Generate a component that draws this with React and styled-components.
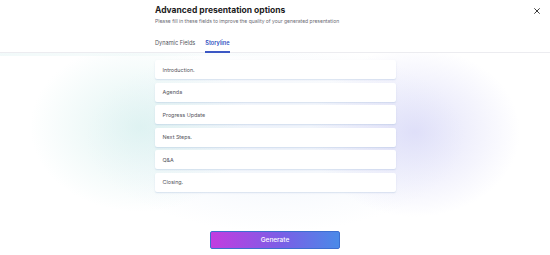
import React, { useState } from "react"
import styled, { createGlobalStyle } from "styled-components"

const GlobalStyle = createGlobalStyle`
  html, body {
    margin: 0;
    padding: 0;
    background: #ffffff;
    font-family: "Inter", "Noto Sans", sans-serif;
  }
`

const Page = styled.div`
  position: relative;
  width: 550px;
  height: 255px;
  overflow: hidden;
  background: #ffffff;
`

const Glow = styled.div`
  position: absolute;
  left: 0;
  top: 52px;
  width: 550px;
  height: 203px;
  pointer-events: none;
  background:
    radial-gradient(ellipse 110px 85px at 140px 75px, rgba(200, 235, 232, 0.55), rgba(255,255,255,0) 100%),
    radial-gradient(ellipse 105px 85px at 415px 80px, rgba(208, 208, 246, 0.65), rgba(255,255,255,0) 100%),
    radial-gradient(ellipse 190px 95px at 275px 85px, rgba(212, 226, 246, 0.4), rgba(255,255,255,0) 100%),
    linear-gradient(to right, rgba(228,244,244,0.5), rgba(255,255,255,0) 60%) top / 100% 4px no-repeat;
`

const Header = styled.header`
  position: relative;
  padding: 5px 0 0 155px;
  border-bottom: 1px solid #ececf0;
`

const Title = styled.h1`
  margin: 0;
  font-size: 8.5px;
  line-height: 11px;
  font-weight: 700;
  color: #1c1c22;
`

const Subtitle = styled.p`
  margin: 2px 0 0;
  font-size: 5px;
  line-height: 7px;
  color: #6b6b73;
`

const Close = styled.button`
  position: absolute;
  right: 8px;
  top: 6px;
  width: 10px;
  height: 10px;
  padding: 0;
  border: 0;
  background: none;
  display: flex;
  align-items: center;
  justify-content: center;
  cursor: pointer;
`

const Tabs = styled.nav`
  display: flex;
  gap: 10px;
  margin-top: 14px;
`

const Tab = styled.button`
  border: 0;
  background: none;
  padding: 0 0 4px;
  font-family: inherit;
  font-size: 5.6px;
  line-height: 8px;
  color: ${p => (p.$active ? "#2f4fbf" : "#55555d")};
  font-weight: ${p => (p.$active ? 600 : 400)};
  border-bottom: 2px solid ${p => (p.$active ? "#3b57c4" : "transparent")};
  margin-bottom: -1px;
  cursor: pointer;
`

const Body = styled.main`
  position: relative;
  display: flex;
  flex-direction: column;
  align-items: center;
  padding-top: 7px;
`

const List = styled.div`
  display: flex;
  flex-direction: column;
  gap: 3.6px;
  width: 241px;
`

const Row = styled.div`
  height: 19px;
  background: #ffffff;
  border-radius: 2px;
  box-shadow: 0 1px 1.5px rgba(150, 175, 210, 0.35);
  display: flex;
  align-items: center;
  padding-left: 8px;
  font-size: 5.4px;
  color: #55555d;
`

const GenerateButton = styled.button`
  margin-top: 39px;
  width: 130px;
  height: 18px;
  border-radius: 2px;
  border: 1px solid #3d6fd0;
  background: linear-gradient(to right, #c23ce0, #7b5fe6 55%, #4a8ae8);
  color: #ffffff;
  font-family: inherit;
  font-size: 6.5px;
  font-weight: 500;
  cursor: pointer;
`

const items = ["Introduction.", "Agenda", "Progress Update", "Next Steps.", "Q&A", "Closing."]

export default function App() {
  const [tab, setTab] = useState("storyline")

  return (
    <>
      <GlobalStyle />
      <Page>
        <Glow />
        <Header>
          <Title>Advanced presentation options</Title>
          <Subtitle>Please fill in these fields to improve the quality of your generated presentation</Subtitle>
          <Close aria-label="Close">
            <svg width="6" height="6" viewBox="0 0 10 10">
              <path d="M1 1 L9 9 M9 1 L1 9" stroke="#333" strokeWidth="1.6" strokeLinecap="round" />
            </svg>
          </Close>
          <Tabs>
            <Tab $active={tab === "fields"} onClick={() => setTab("fields")}>Dynamic Fields</Tab>
            <Tab $active={tab === "storyline"} onClick={() => setTab("storyline")}>Storyline</Tab>
          </Tabs>
        </Header>
        <Body>
          <List>
            {items.map((item, index) => (
              <Row key={index}>{item}</Row>
            ))}
          </List>
          <GenerateButton>Generate</GenerateButton>
        </Body>
      </Page>
    </>
  )
}
